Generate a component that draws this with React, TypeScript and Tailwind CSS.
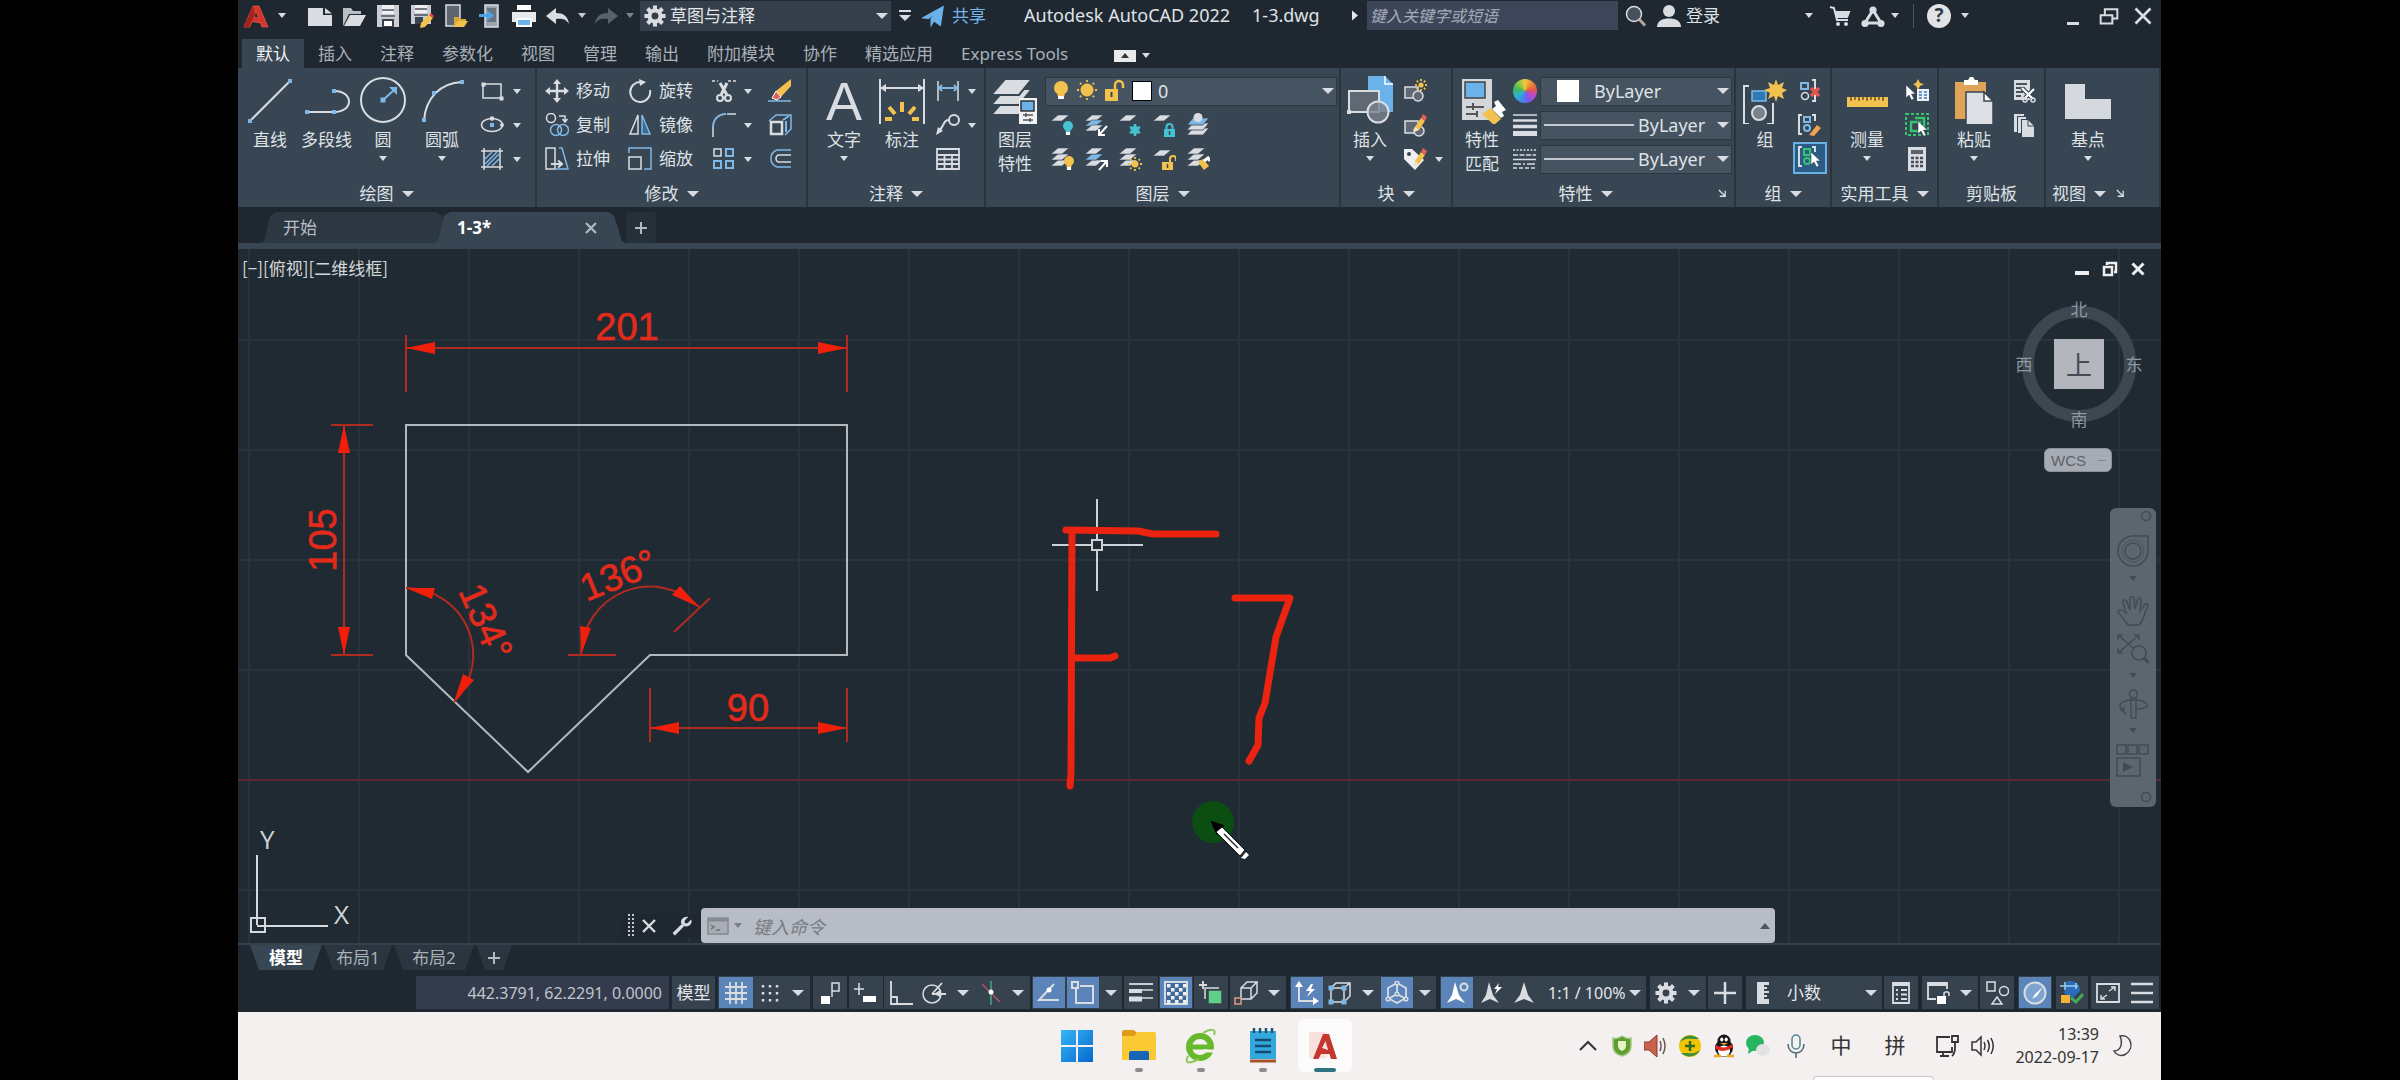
import React, { ReactNode } from 'react';

/* ---------- shared pieces ---------- */

const W = '#d9dde2';
const B = '#7fb8e6';
const Y = '#f2c14e';

function Ico({ children, c = 'h-6 w-6', vb = '0 0 24 24' }: { children: ReactNode; c?: string; vb?: string }) {
  return (
    <svg viewBox={vb} className={`shrink-0 ${c}`} fill="none" stroke={W} strokeWidth="1.5" aria-hidden="true">
      {children}
    </svg>
  );
}

function Tri({ big = false, c = 'fill-[#d9dde2]' }: { big?: boolean; c?: string }) {
  return (
    <svg viewBox="0 0 12 6" className={`shrink-0 ${big ? 'h-[6px] w-[12px]' : 'h-[5px] w-[8px]'} ${c}`} preserveAspectRatio="none" aria-hidden="true">
      <path d="M0 0H12L6 6Z" />
    </svg>
  );
}

function ArrowBtn({ c = 'w-5', label = '更多', big = false }: { c?: string; label?: string; big?: boolean }) {
  return (
    <button type="button" aria-label={label} className={`flex h-full shrink-0 items-center justify-center ${c}`}>
      <Tri big={big} />
    </button>
  );
}

function IconBtn({ label, children, c = 'w-7' }: { label: string; children: ReactNode; c?: string }) {
  return (
    <button type="button" aria-label={label} className={`flex h-[34px] shrink-0 items-center justify-center ${c}`}>
      {children}
    </button>
  );
}

function Big({ icon, label, label2, arrow, c }: { icon: ReactNode; label: string; label2?: string; arrow?: boolean; c: string }) {
  return (
    <button type="button" className={`flex shrink-0 flex-col items-center self-start whitespace-nowrap pt-0.5 ${c}`}>
      {icon}
      <span className="mt-1.5 h-5 text-[17px] leading-5">{label}</span>
      {label2 && <span className="mt-1 h-5 text-[17px] leading-5">{label2}</span>}
      {arrow && (
        <span className="mt-1.5 flex">
          <Tri />
        </span>
      )}
    </button>
  );
}

function Panel({ title, arrow = true, launcher, left, children }: { title: string; arrow?: boolean; launcher?: boolean; left?: boolean; children: ReactNode }) {
  return (
    <section aria-label={title} className="flex flex-col border-r-2 border-[#2a343e] pt-1.5">
      <div className="flex h-[102px]">{children}</div>
      <div className="mt-1 flex h-[27px] items-center">
        <button type="button" className={`flex items-center gap-2 whitespace-nowrap text-[17px] leading-6 ${left ? 'pl-[6px]' : 'flex-1 justify-center'}`}>
          {title}
          {arrow && <Tri big />}
        </button>
        {launcher && (
          <button type="button" aria-label={`${title}设置`} className={left ? 'ml-[10px]' : 'mr-[7px]'}>
            <Ico c="h-[9px] w-[9px]" vb="0 0 10 10">
              <path d="M1 1L8 8M8 2V8H2" />
            </Ico>
          </button>
        )}
      </div>
    </section>
  );
}

/* ---------- icon drawings ---------- */

const dot = (x: number, y: number, s = 4) => <rect key={`${x}-${y}`} x={x - s / 2} y={y - s / 2} width={s} height={s} fill={B} stroke="none" />;

const Sheet = ({ y = 0, f = W }: { y?: number; f?: string }) => <path d={`M8 ${1 + y}H19L12 ${7 + y}H1Z`} fill={f} stroke="#384552" strokeWidth="0.6" />;

const Pencil = () => (
  <g stroke="none">
    <path d="M12 14L18 5L22 8L16 17L11 19Z" fill={Y} />
    <path d="M18 5L20 1L24 4L22 8Z" fill="#e0605a" />
    <path d="M12 14L11 19L16 17Z" fill="#f3e3c8" />
  </g>
);

const Cursor = ({ x, y }: { x: number; y: number }) => (
  <path d={`M${x} ${y}V${y + 13}L${x + 3} ${y + 10}L${x + 5.5} ${y + 15}L${x + 8} ${y + 14}L${x + 5.5} ${y + 9}H${x + 9.5}Z`} fill="#fff" stroke="#384552" strokeWidth="0.6" />
);

const Lock = ({ x, y, f, open }: { x: number; y: number; f: string; open?: boolean }) => (
  <g>
    <rect x={x} y={y} width="11" height="8" fill={f} stroke="none" />
    <path d={open ? `M${x + 8} ${y}V${y - 3}A3 3 0 0 1 ${x + 14} ${y - 3}V${y - 1}` : `M${x + 2.5} ${y}V${y - 2}A3 3 0 0 1 ${x + 8.5} ${y - 2}V${y}`} stroke={f} strokeWidth="2" />
    <path d={`M${x + 5.5} ${y + 2}v4`} stroke="#384552" />
  </g>
);

const Sun = ({ x, y, r, f = Y }: { x: number; y: number; r: number; f?: string }) => (
  <g stroke={f} strokeWidth="1.8">
    <circle cx={x} cy={y} r={r} fill={f} stroke="none" />
    {[0, 45, 90, 135, 180, 225, 270, 315].map((a) => (
      <path key={a} d={`M${x} ${y - r - 1.5}V${y - r - 3.5}`} transform={`rotate(${a} ${x} ${y})`} />
    ))}
  </g>
);

const Bulb = ({ x, y, f = Y, r = 7 }: { x: number; y: number; f?: string; r?: number }) => (
  <g stroke="none">
    <circle cx={x} cy={y} r={r} fill={f} />
    <path d={`M${x - r / 2} ${y + r - 2}h${r}v3h${-r}z`} fill={f} />
    <path d={`M${x - r / 2.4} ${y + r + 1}h${r / 1.2}v3h${-r / 1.2}z`} fill="#fff" />
  </g>
);

const Gear = ({ c = 'h-[22px] w-[22px]' }: { c?: string }) => (
  <Ico c={c}>
    <circle cx="12" cy="12" r="6" strokeWidth="4.5" />
    {[0, 45, 90, 135, 180, 225, 270, 315].map((a) => (
      <path key={a} d="M12 0.5V5" strokeWidth="4.4" transform={`rotate(${a} 12 12)`} />
    ))}
  </Ico>
);

/* ---------- title bar ---------- */

function TitleBar() {
  return (
    <header className="flex h-[39px] items-start whitespace-nowrap bg-[#1f2831] pl-1 text-[18px]">
      <div className="flex h-[31px] flex-1 items-center">
        <button type="button" aria-label="应用程序菜单" className="flex items-center gap-2">
          <Ico c="h-7 w-7" vb="0 0 28 28">
            <path d="M2 25L11 4H17L26 25H20L18.500 21L10 19.500L7.500 25Z M12 15L16.500 16L14 9Z" fill="#d3362c" fillRule="evenodd" stroke="#e5564a" strokeWidth="0.8" />
            <path d="M2 25L7 25L13 12L11 4Z" fill="#a8201a" stroke="none" />
          </Ico>
          <Tri />
        </button>
        <div className="ml-[22px] flex items-center gap-[10px]">
          <button type="button" aria-label="新建">
            <Ico><path d="M0 4H15V11H24V22H0Z" fill={W} stroke="none" /><path d="M17 4L24 9.500H17Z" fill={W} stroke="none" /></Ico>
          </button>
          <button type="button" aria-label="打开">
            <Ico><path d="M1 22V4H9L11 7H19V10H7Z" fill="#b9bec5" stroke="none" /><path d="M8 11H24L18 22H2Z" fill={W} stroke="none" /></Ico>
          </button>
          <button type="button" aria-label="保存">
            <Ico><path d="M1 1H23V23H1Z" fill="#c9ccd2" stroke="none" /><path d="M6 1H18V10H6Z" fill="#efeff1" stroke="none" /><path d="M6 6H18M5 12H19" stroke="#4b535d" /><path d="M6 15H18V23H6Z" fill="#3a424c" stroke="none" /><path d="M8 17H16V22H8Z" fill="#fff" stroke="none" /></Ico>
          </button>
          <button type="button" aria-label="另存为">
            <Ico><path d="M1 1H21V20H1Z" fill="#c9ccd2" stroke="none" /><path d="M5 1H17V9H5Z" fill="#efeff1" stroke="none" /><path d="M5 5H17M4 11H18" stroke="#4b535d" /><path d="M5 13H13V20H5Z" fill="#3a424c" stroke="none" /><path d="M11 19L19 11L23 14L15 23L10 24Z" fill={Y} stroke="none" /><path d="M19 11L21 9L24 12L23 14Z" fill="#e0453a" stroke="none" /></Ico>
          </button>
          <button type="button" aria-label="从移动设备打开">
            <Ico><path d="M2 1H16V22H2Z" fill="#5d666f" stroke={W} /><path d="M10 13H15L17 15H22V18H14L11 22H10Z" fill="#d9a83a" stroke="none" /><path d="M14 17H24L20 23H10Z" fill={Y} stroke="none" /></Ico>
          </button>
          <button type="button" aria-label="保存到移动设备">
            <Ico><path d="M7 1H20V23H7Z" fill="#9ea4ac" stroke={W} /><path d="M9 4H18V18H9Z" fill="#6b747e" stroke="none" /><path d="M1 10H9V6L16 11.500L9 17V13H1Z" fill="#4ba3e3" stroke="none" /></Ico>
          </button>
          <button type="button" aria-label="打印">
            <Ico><path d="M5 1H19V6H5Z" fill="#fff" stroke="none" /><path d="M0 8H24V18H0Z" fill="#e6e8eb" stroke="none" /><path d="M4 14H20V23H4Z" fill="#fff" stroke="none" /><path d="M6 16H18V21H6Z" fill="#6bb1ea" stroke="none" /></Ico>
          </button>
        </div>
        <div className="ml-[10px] flex items-center gap-2">
          <button type="button" aria-label="放弃">
            <Ico><path d="M0 12L10 4V9C17 9 22 12 23 20C20 15 16 14.500 10 15V20Z" fill={W} stroke="none" /></Ico>
          </button>
          <Tri c="fill-[#c5cad0]" />
          <button type="button" aria-label="重做">
            <Ico><path d="M24 12L14 4V9C7 9 2 12 1 20C4 15 8 14.500 14 15V20Z" fill="#59626c" stroke="none" /></Ico>
          </button>
          <Tri c="fill-[#7d858e]" />
        </div>
        <div className="relative ml-[6px] flex h-[30px] w-[251px] items-center bg-[#343f4b]">
          <span className="pointer-events-none absolute left-1 flex"><Gear /></span>
          <select aria-label="工作空间" className="h-full w-full appearance-none bg-transparent pl-[30px] text-[17px] text-[#e4e7ea]">
            <option>草图与注释</option>
          </select>
          <span className="pointer-events-none absolute right-[3px] flex"><Tri big /></span>
        </div>
        <button type="button" aria-label="自定义快速访问工具栏" className="ml-2 flex flex-col items-center gap-[3px]">
          <span className="h-[2px] w-3 bg-[#d9dde2]" />
          <Tri big />
        </button>
        <button type="button" className="ml-[11px] flex items-center gap-2 text-[17px] text-[#74b5ec]">
          <Ico c="h-[22px] w-[22px]"><path d="M1 14L23 2L20 22L13 17L10 22V15L19 6L7 14.500Z" fill="#6bb1ea" stroke="#6bb1ea" /></Ico>
          共享
        </button>
        <h1 className="ml-[38px] flex gap-[22px] text-[18px] text-[#dfe2e6]">
          <span>Autodesk AutoCAD 2022</span>
          <span>1-3.dwg</span>
        </h1>
      </div>
      <div className="flex h-[31px] items-center">
        <svg viewBox="0 0 6 10" className="mr-[9px] h-[11px] w-[6px] fill-[#e4e7ea]" aria-hidden="true"><path d="M0 0L6 5L0 10Z" /></svg>
        <input aria-label="搜索" placeholder="键入关键字或短语" className="h-[29px] w-[251px] bg-[#3c4658] pl-[3px] text-[16px] italic placeholder:text-[#a5acb8]" />
        <button type="button" aria-label="查找" className="ml-[6px]">
          <Ico><circle cx="10" cy="10" r="7.500" fill="#46515d" /><path d="M15.500 15.500L21 21.500" strokeWidth="3" stroke="#b7a79a" /></Ico>
        </button>
        <button type="button" className="ml-[9px] flex items-center gap-[5px] text-[17px] text-[#dfe2e6]">
          <Ico><circle cx="12" cy="7" r="6" fill={W} stroke="none" /><path d="M0 23C0 17 5 14.500 12 14.500S24 17 24 23Z" fill={W} stroke="none" /></Ico>
          登录
        </button>
        <ArrowBtn c="ml-[79px] w-5" label="登录菜单" />
        <button type="button" aria-label="应用商店" className="ml-[9px]">
          <Ico><path d="M2 3L6 4L9 16H20M7 8H21L19 13H9" stroke={W} strokeWidth="2" /><path d="M7 7H22L20 13H8Z" fill={W} stroke="none" /><circle cx="10" cy="20" r="2" fill={W} stroke="none" /><circle cx="18" cy="20" r="2" fill={W} stroke="none" /></Ico>
        </button>
        <button type="button" aria-label="Autodesk 帐户" className="ml-[9px]">
          <Ico><path d="M12 6L4 19H20Z" strokeWidth="3" /><circle cx="12" cy="6" r="3.600" fill={W} stroke="none" /><circle cx="4" cy="19.500" r="3.600" fill={W} stroke="none" /><circle cx="20" cy="19.500" r="3.600" fill={W} stroke="none" /></Ico>
        </button>
        <ArrowBtn label="帐户菜单" />
        <span className="ml-2 h-6 w-px bg-[#4a545f]" />
        <button type="button" aria-label="帮助" className="ml-[13px] flex h-6 w-6 items-center justify-center rounded-full bg-[#e1e3e6] text-[19px] font-bold leading-none text-[#333b45]">?</button>
        <ArrowBtn c="ml-1 w-5" label="帮助菜单" />
        <button type="button" aria-label="最小化" className="ml-[92px] mt-4 h-[3px] w-3 bg-[#d9dde2]" />
        <button type="button" aria-label="还原" className="ml-5">
          <Ico c="h-5 w-5"><path d="M2 11H16V21H2Z M7 10V4H22V15H17" strokeWidth="2.400" /></Ico>
        </button>
        <button type="button" aria-label="关闭" className="ml-[14px] mr-2">
          <Ico c="h-5 w-5"><path d="M3 3L21 21M21 3L3 21" strokeWidth="3.200" /></Ico>
        </button>
      </div>
    </header>
  );
}

function MenuTabs() {
  const tabs = ['默认', '插入', '注释', '参数化', '视图', '管理', '输出', '附加模块', '协作', '精选应用', 'Express Tools'];
  return (
    <nav aria-label="功能区选项卡" className="flex h-[29px] items-stretch bg-[#1f2831] pl-1 text-[17px]">
      {tabs.map((t, i) => (
        <button
          key={t}
          type="button"
          className={`whitespace-nowrap px-[14px] leading-[29px] ${i === 0 ? 'bg-[#384552] text-[#eef0f2]' : 'text-[#a9b0b8]'}`}
        >
          {t}
        </button>
      ))}
      <button type="button" aria-label="最小化功能区" className="ml-8 flex items-center gap-[6px] pt-1">
        <span className="flex h-3 w-[22px] items-center justify-center bg-[#e8eaec]">
          <svg viewBox="0 0 8 5" className="h-[5px] w-2 fill-[#333]" aria-hidden="true"><path d="M0 5L4 0L8 5Z" /></svg>
        </span>
        <Tri />
      </button>
    </nav>
  );
}

/* ---------- ribbon ---------- */

const smallRow = 'flex h-[34px] items-center';
const L = 'h-12 w-12';

function Combo({ label, value, pl, children, c = 'h-[29px]' }: { label: string; value: string; pl: string; children?: ReactNode; c?: string }) {
  return (
    <div className={`relative flex w-full items-center border border-[#2d3843] bg-[#465361] ${c}`}>
      {children}
      <select aria-label={label} className={`h-full w-full appearance-none bg-transparent text-[18px] leading-6 text-[#dfe2e6] ${pl}`}>
        <option>{value}</option>
      </select>
      <span className="pointer-events-none absolute right-[2px] flex"><Tri big /></span>
    </div>
  );
}

const LabelBtn = ({ icon, text }: { icon: ReactNode; text: string }) => (
  <button type="button" className={`${smallRow} gap-[5px] whitespace-nowrap text-[17px]`}>
    <span className="flex w-7 justify-center">{icon}</span>
    {text}
  </button>
);

function Ribbon() {
  const layerTools: ReactNode[] = [
    <><Sheet y={1} /><Bulb x={18} y={13} f="#45c3d3" r={5} /></>,
    <><Sheet y={1} /><Sheet y={6} f={B} /><Sheet y={11} /><path d="M23 13L15 22M15 16V22H21" stroke="#fff" strokeWidth="2" /></>,
    <><Sheet y={1} /><path d="M17 11V23M12 14L22 20M22 14L12 20" stroke="#45c3d3" strokeWidth="2.500" /><circle cx="17" cy="17" r="3.500" stroke="#45c3d3" /></>,
    <><Sheet y={1} /><Lock x={12} y={16} f="#45c3d3" /></>,
    <><path d="M7 15H23L17 22H1Z" fill={W} stroke="#384552" strokeWidth="0.8" /><path d="M7 10H23L17 17H1Z" fill={W} stroke="#384552" strokeWidth="0.8" /><path d="M7 5H23L17 12H1Z" fill={B} stroke="#384552" strokeWidth="0.8" /><circle cx="12" cy="4.500" r="4.500" fill={W} stroke="none" /></>,
    <><Sheet y={12} /><Sheet y={6} /><Sheet /><Bulb x={19} y={14} r={5} /></>,
    <><Sheet y={12} /><Sheet y={6} f={B} /><Sheet /><path d="M15 23L23 14M17 14H23V20" stroke="#fff" strokeWidth="2" /></>,
    <><Sheet y={12} /><Sheet y={6} /><Sheet /><Sun x={17} y={17} r={3.5} /></>,
    <><Sheet y={2} /><Lock x={10} y={15} f={Y} open /></>,
    <><Sheet y={12} /><Sheet y={6} /><Sheet /><path d="M12 15L17 12L23 19L18 23Z" fill={Y} stroke="none" /><path d="M18 14L22 11L24 14" stroke="#fff" strokeWidth="3" /></>,
  ];
  return (
    <div className="grid grid-cols-[299fr_271fr_178fr_355fr_112fr_283fr_96fr_107fr_107fr_115fr] bg-[#384552] text-[#dfe2e6]">
      <Panel title="绘图">
        <div className="flex pl-[6px]">
          <Big c="w-[52px]" label="直线" icon={<Ico c={L} vb="0 0 48 48"><path d="M4 45L44 5" strokeWidth="2" />{dot(4, 45)}{dot(44, 5)}</Ico>} />
          <Big c="w-[61px]" label="多段线" icon={<Ico c={L} vb="0 0 48 48"><path d="M4 36H31C51 36 51 15 31 15" strokeWidth="2" />{dot(4, 36)}{dot(31, 36)}{dot(31, 15)}</Ico>} />
          <Big c="w-[52px]" label="圆" arrow icon={<Ico c={L} vb="0 0 48 48"><circle cx="24" cy="24" r="22" strokeWidth="2" /><path d="M24 24L35 14" stroke={B} strokeWidth="2" /><path d="M30 11H38V19Z" fill={B} stroke="none" />{dot(24, 24, 5)}</Ico>} />
          <Big c="w-[66px]" label="圆弧" arrow icon={<Ico c={L} vb="0 0 48 48"><path d="M6 44C8 22 22 7 44 6" strokeWidth="2" />{dot(6, 44)}{dot(16, 17)}{dot(44, 6)}</Ico>} />
          <div className="ml-[2px]">
            <div className={smallRow}><IconBtn label="矩形" c="w-[30px]"><Ico><path d="M3 5H21V19H3Z" />{[[3, 5], [21, 19]].map(([x, y]) => <rect key={x} x={x - 1.5} y={y - 1.5} width="4" height="4" fill={W} stroke="none" />)}</Ico></IconBtn><ArrowBtn /></div>
            <div className={smallRow}><IconBtn label="椭圆" c="w-[30px]"><Ico><ellipse cx="12" cy="12" rx="10.500" ry="6.500" />{dot(12, 12)}<circle cx="12" cy="5.500" r="1.500" fill={W} /><circle cx="22" cy="12" r="1.200" fill={W} /></Ico></IconBtn><ArrowBtn /></div>
            <div className={smallRow}><IconBtn label="图案填充" c="w-[30px]"><Ico><path d="M1 4H23M1 20H23M4 1V23M20 1V23" /><path d="M5 12L12 5M5 17L17 5M7 19L19 7M12 19L19 12" stroke={B} /></Ico></IconBtn><ArrowBtn /></div>
          </div>
        </div>
      </Panel>

      <Panel title="修改">
        <div className="flex pl-[6px]">
          <div>
            <LabelBtn text="移动" icon={<Ico><path d="M12 3V21M3 12H21" strokeWidth="2.400" /><path d="M12 0L16 5H8ZM12 24L8 19H16ZM0 12L5 8V16ZM24 12L19 16V8Z" fill={W} stroke="none" /></Ico>} />
            <LabelBtn text="复制" icon={<Ico><circle cx="6" cy="5" r="4.500" /><path d="M14 3H20V8M17.500 6L20 9L22.500 6" /><circle cx="11" cy="17" r="5.500" stroke={B} /><circle cx="18" cy="17" r="5.500" stroke={B} /></Ico>} />
            <LabelBtn text="拉伸" icon={<Ico><path d="M1 1H10V22H1Z" /><path d="M14 1H17L23 22H11" stroke={B} /><path d="M6 17H16M13 13.500L17 17L13 20.500" strokeWidth="2" /></Ico>} />
          </div>
          <div className="ml-[16px]">
            <LabelBtn text="旋转" icon={<Ico><path d="M13 3A10 10 0 1 0 22 11" strokeWidth="2" /><path d="M11 0L18 3L12 7Z" fill={W} stroke="none" /></Ico>} />
            <LabelBtn text="镜像" icon={<Ico><path d="M10 2V21H2Z" /><path d="M14 2V21H22Z" stroke={B} fill="#3c6a92" /></Ico>} />
            <LabelBtn text="缩放" icon={<Ico><path d="M1 10H13V22H1Z" /><path d="M1 6V1H23V22H16" stroke={B} /></Ico>} />
          </div>
          <div className="ml-[18px]">
            <div className={smallRow}><IconBtn label="修剪" c="w-[26px]"><Ico><path d="M0 2H6M16 2H24" strokeDasharray="3 2" /><path d="M8 4L15 16M15 4L9 16" strokeWidth="3" /><circle cx="8" cy="19" r="3" strokeWidth="2" /><circle cx="16" cy="19" r="3" strokeWidth="2" /></Ico></IconBtn><ArrowBtn c="w-[22px]" /></div>
            <div className={smallRow}><IconBtn label="圆角" c="w-[26px]"><Ico><path d="M1 24V14" /><path d="M1 14C1 6 7 1 14 1" stroke={B} strokeWidth="2" /><path d="M15 1H24" /></Ico></IconBtn><ArrowBtn c="w-[22px]" /></div>
            <div className={smallRow}><IconBtn label="阵列" c="w-[26px]"><Ico><path d="M2 2H9V9H2Z" /><path d="M14 2H21V9H14ZM2 14H9V21H2ZM14 14H21V21H14Z" stroke={B} strokeWidth="2" /></Ico></IconBtn><ArrowBtn c="w-[22px]" /></div>
          </div>
          <div className="ml-[7px]">
            <IconBtn label="删除"><Ico><path d="M0 22H23" stroke={B} /><path d="M8 12L23 0V7L13 18Z" fill={Y} stroke="none" /><path d="M8 12L13 18L9 21L4 19Z" fill="#e0605a" stroke="#fff" strokeWidth="1" /></Ico></IconBtn>
            <IconBtn label="分解"><Ico><path d="M1 8L8 2H23V16L17 22" stroke={B} /><path d="M3 9H14V21H3Z" strokeWidth="2.500" /><path d="M15 7L21 3M18 8V19" stroke={B} strokeWidth="2" /></Ico></IconBtn>
            <IconBtn label="偏移"><Ico><path d="M23 3H9A9 9 0 0 0 9 20H23" stroke={B} /><path d="M23 8H10A4 4 0 0 0 10 15H23" /></Ico></IconBtn>
          </div>
        </div>
      </Panel>

      <Panel title="注释">
        <div className="flex pl-[10px]">
          <Big c="w-[52px]" label="文字" arrow icon={<span className="h-12 font-['Liberation_Sans',Arial,sans-serif] text-[54px] leading-[50px] text-[#d9dde2]">A</span>} />
          <Big c="w-[64px]" label="标注" icon={<Ico c={L} vb="0 0 48 48"><path d="M2 3V48M46 3V48M3 12H45" strokeWidth="2" /><path d="M2 12L8 8V16ZM46 12L40 16V8Z" fill={W} stroke="none" /><path d="M24 36V26M17 38L11 31M31 38L37 31M14 43H7M34 43H41" stroke={Y} strokeWidth="4" /></Ico>} />
          <div>
            <div className={smallRow}><IconBtn label="线性"><Ico><path d="M2 2V22M22 2V22" /><path d="M3 9H21M6 6L3 9L6 12M18 6L21 9L18 12" stroke={B} strokeWidth="2" /></Ico></IconBtn><ArrowBtn /></div>
            <div className={smallRow}><IconBtn label="引线"><Ico><circle cx="18" cy="7" r="5" strokeWidth="2" /><path d="M13 7C7 7 9 12 3 18" strokeWidth="2" /><path d="M0 22L2 14L7 18Z" fill={W} stroke="none" /></Ico></IconBtn><ArrowBtn /></div>
            <div className={smallRow}><IconBtn label="表格"><Ico><path d="M1 2H23V22H1ZM1 8H23M1 12.500H23M1 17H23M8.500 8V22M16 8V22" strokeWidth="1.800" /></Ico></IconBtn></div>
          </div>
        </div>
      </Panel>

      <Panel title="图层">
        <div className="flex w-full pl-[3px] pr-[2px]">
          <Big
            c="w-[52px]"
            label="图层"
            label2="特性"
            icon={
              <Ico c={L} vb="0 0 48 48">
                {[23, 13, 3].map((y) => <path key={y} d={`M14 ${y}H41L28 ${y + 16}H0Z`} fill={W} stroke="#384552" strokeWidth="2" />)}
                <path d="M28 22H46V48H28Z" fill="#f1f2f4" stroke="none" /><path d="M30 25H43V35H30Z" fill="#6bb1ea" stroke="#333" /><path d="M32 39H42M32 44H42M35 37V41M39 42V46" stroke="#555" />
              </Ico>
            }
          />
          <div className="ml-1 flex-1">
            <div className={smallRow}>
              <Combo label="图层" value="0" pl="pl-[112px]">
                <div className="pointer-events-none absolute left-[3px] flex items-center gap-[2px]">
                  <Ico><Bulb x={12} y={9} r={7} /></Ico>
                  <Ico><Sun x={12} y={11} r={6.5} /></Ico>
                  <Ico><path d="M4 10H17V22H4Z" fill={Y} stroke="none" /><path d="M14 10V6A4 4 0 0 1 22 6V9" stroke={Y} strokeWidth="2.500" /><path d="M10.500 13V18" stroke="#384552" strokeWidth="2" /></Ico>
                </div>
                <span className="pointer-events-none absolute left-[86px] h-5 w-5 border border-black bg-white" />
              </Combo>
            </div>
            <div className="grid w-[170px] grid-cols-5">
              {layerTools.map((g, i) => (
                <IconBtn key={i} label={`图层工具 ${i + 1}`} c="w-[34px]"><Ico>{g}</Ico></IconBtn>
              ))}
            </div>
          </div>
        </div>
      </Panel>

      <Panel title="块">
        <div className="flex pl-[2px]">
          <Big c="w-[54px]" label="插入" arrow icon={<Ico c={L} vb="0 0 48 48"><path d="M22 0H39L47 8V36H22Z" fill="#6bb1ea" stroke="none" /><path d="M39 0V8H47" stroke="#fff" /><path d="M3 15H33V36H3Z" fill="#5f6873" stroke={W} strokeWidth="2" /><circle cx="32" cy="36" r="10.500" fill="#7a828c" fillOpacity=".8" stroke={W} strokeWidth="2" /><rect x="1" y="34" width="4" height="4" fill={W} stroke="none" /></Ico>} />
          <div className="ml-[4px]">
            <IconBtn label="创建块"><Ico><path d="M2 8H15V19H2Z" fill="#5f6873" /><circle cx="15" cy="17" r="5" fill="#5f6873" /><Sun x={18} y={6} r={2.6} /></Ico></IconBtn>
            <IconBtn label="编辑块"><Ico><path d="M2 8H15V20H2Z" fill="#5f6873" /><circle cx="16" cy="18" r="5" fill="#5f6873" /><Pencil /></Ico></IconBtn>
            <div className={smallRow}><IconBtn label="块属性"><Ico><path d="M1 2H9L21 13L12 23L1 12Z" fill="#eef0f2" stroke="none" /><circle cx="6" cy="7" r="2" fill="#384552" stroke="none" /><Pencil /></Ico></IconBtn><ArrowBtn /></div>
          </div>
        </div>
      </Panel>

      <Panel title="特性" launcher>
        <div className="flex w-full pl-[3px] pr-[2px]">
          <Big c="w-[52px]" label="特性" label2="匹配" icon={<Ico c={L} vb="0 0 48 48"><path d="M4 3H34V44H4Z" fill="#d3d6da" stroke="none" /><path d="M7 6H27V22H7Z" fill="#6bb1ea" stroke="#444" /><path d="M8 31H26M8 38H20M15 27V34M19 35V41" stroke="#555" strokeWidth="2" /><path d="M24 38L33 32L43 43L36 49Z" fill={Y} stroke="none" /><path d="M34 33L38 30L36 26L40 24L48 34L44 36L46 40L43 42Z" fill="#fff" stroke="none" /></Ico>} />
          <div className="ml-[3px]">
            <IconBtn label="颜色">
              <span className="h-6 w-6 rounded-full bg-[conic-gradient(#f3c944,#e98b2f,#e2574c,#b94ad0,#7a5ce6,#3f8df0,#2fb5c9,#3fb56b,#8cc63f,#f3c944)]" />
            </IconBtn>
            <IconBtn label="线宽"><Ico><path d="M0 2H24" strokeWidth="1.500" /><path d="M0 7.500H24" strokeWidth="2.500" /><path d="M0 13.500H24" strokeWidth="3.500" /><path d="M0 20.500H24" strokeWidth="5" /></Ico></IconBtn>
            <IconBtn label="线型"><Ico><path d="M0 3H23" strokeDasharray="2 1.500" /><path d="M0 8H23" strokeDasharray="5 1.500" /><path d="M0 12.500H23" /><path d="M0 17H23" strokeDasharray="8 2 2 2" /><path d="M0 21H23" strokeDasharray="4 2" /></Ico></IconBtn>
          </div>
          <div className="ml-[1px] flex-1">
            <div className={smallRow}>
              <Combo label="对象颜色" value="ByLayer" pl="pl-[53px]">
                <span className="pointer-events-none absolute left-4 h-[22px] w-[22px] bg-white" />
              </Combo>
            </div>
            <div className={smallRow}>
              <Combo label="线宽" value="ByLayer" pl="pl-[97px]">
                <span className="pointer-events-none absolute left-[3px] h-[2px] w-[90px] bg-[#c3c8cf]" />
              </Combo>
            </div>
            <div className={smallRow}>
              <Combo label="线型" value="ByLayer" pl="pl-[97px]">
                <span className="pointer-events-none absolute left-[3px] h-[2px] w-[90px] bg-[#c3c8cf]" />
              </Combo>
            </div>
          </div>
        </div>
      </Panel>

      <Panel title="组">
        <div className="flex pl-1">
          <Big c="w-[50px]" label="组" icon={<Ico c={L} vb="0 0 48 48"><path d="M8 10H3V48H8M26 48H32V27" strokeWidth="2" /><path d="M11 15H25V25H11Z" fill="#2f78b8" stroke={B} /><circle cx="18" cy="37" r="7" fill="#7a828c" stroke={W} strokeWidth="2" /><path d="M35 3L37 9L43 6L41 12L46 14L41 17L43 23L37 20L35 26L33 20L27 23L29 17L23 14L29 12L27 6L33 9Z" fill={Y} stroke="none" /></Ico>} />
          <div className="ml-[3px]">
            <IconBtn label="解除编组" c="w-[34px]"><Ico><path d="M14 1H17V22H14" strokeWidth="2" /><path d="M3 4H10V10H3Z" stroke={B} strokeWidth="2" /><circle cx="7" cy="17" r="3.500" /><path d="M13 9L21 17M21 9L13 17" stroke="#e2574c" strokeWidth="3.500" /></Ico></IconBtn>
            <IconBtn label="组编辑" c="w-[34px]"><Ico><path d="M4 2H1V21H4M14 2H17V8" strokeWidth="2" /><path d="M6 4H12V9H6Z" stroke={B} strokeWidth="2" /><circle cx="9" cy="15" r="3" stroke={B} strokeWidth="2" /><path d="M11 22L19 12L23 15L16 23Z" fill="#eda44c" stroke="none" /></Ico></IconBtn>
            <button type="button" aria-label="启用组选择" aria-pressed="true" className="flex h-8 w-[34px] items-center justify-center border-2 border-[#6ab0e4] bg-[#2b5c86]">
              <Ico><path d="M4 1H1V20H4M14 1H17V6" strokeWidth="2" /><path d="M6 3H12V9H6Z" stroke="#35c46f" strokeWidth="2" /><circle cx="9" cy="15" r="3" stroke="#35c46f" strokeWidth="2" /><Cursor x={13} y={6} /></Ico>
            </button>
          </div>
        </div>
      </Panel>

      <Panel title="实用工具">
        <div className="flex pl-[7px]">
          <Big c="w-14" label="测量" arrow icon={<Ico c={L} vb="0 0 48 48"><path d="M4 21H45V31H4Z" fill={Y} stroke="none" /><path d="M8 21V25M12 21V24M16 21V25M20 21V24M24 21V25M28 21V24M32 21V25M36 21V24M40 21V25" stroke="#6b5420" /></Ico>} />
          <div className="ml-2">
            <IconBtn label="快速选择"><Ico><path d="M13 0L15 4L19 5L15 7L13 11L11 7L8 5L11 4Z" fill={Y} stroke="none" /><path d="M12 10H24V22H12Z" fill="#eef0f2" stroke="none" /><path d="M14 13H17M14 16H17M14 19H17M19 13H22M19 16H22M19 19H22" stroke="#3278c8" /><Cursor x={1} y={6} /></Ico></IconBtn>
            <IconBtn label="全部选择"><Ico><path d="M1 1H23V22H1Z" stroke="#35c46f" strokeDasharray="3 2" strokeWidth="2" /><path d="M6 9H15V18H6ZM10 5H19V14" stroke="#35c46f" strokeWidth="2.500" /><Cursor x={13} y={8} /></Ico></IconBtn>
            <IconBtn label="快速计算器"><Ico><path d="M3 0H21V24H3Z" fill="#d9dde2" stroke="none" /><path d="M6 3H18V7H6Z" fill="#5a636d" stroke="none" />{[10, 14, 18].map((y) => <path key={y} d={`M6 ${y + 1}H9M10.500 ${y + 1}H13.500M15 ${y + 1}H18`} stroke="#444c56" strokeWidth="2.500" />)}</Ico></IconBtn>
          </div>
        </div>
      </Panel>

      <Panel title="剪贴板" arrow={false}>
        <div className="flex pl-[7px]">
          <Big c="w-14" label="粘贴" arrow icon={<Ico c={L} vb="0 0 48 48"><path d="M5 6H36V43H5Z" fill="#e0a458" stroke="none" /><path d="M14 9V4H18L20 1H23L25 4H28V9Z" fill="#fff" stroke="none" /><path d="M16 16H34L43 25V49H16Z" fill="#dcdfe3" stroke="#384552" /><path d="M34 16V25H43Z" fill="#fff" stroke="#384552" /></Ico>} />
          <div className="ml-2">
            <IconBtn label="剪切"><Ico><path d="M2 1H18V21H2Z" fill={W} stroke="none" /><path d="M4 5H15M4 9H13M4 13H11M4 17H9" stroke="#4b535d" strokeWidth="1.800" /><path d="M10 9L21 20M22 10L13 19" strokeWidth="4.500" stroke="#384552" /><path d="M10 9L21 20M22 10L13 19" strokeWidth="2.200" stroke="#fff" /><circle cx="13" cy="21" r="2" /><circle cx="21" cy="21" r="2" /></Ico></IconBtn>
            <IconBtn label="复制"><Ico><path d="M2 1H12V3H5V19H2Z" fill={W} stroke="none" /><path d="M6 4H14V6H9V20H6Z" fill={W} stroke="none" /><path d="M10 7H16L22 13V24H10Z" fill={W} stroke="none" /><path d="M16 7V13H22" stroke="#384552" strokeWidth="1" /></Ico></IconBtn>
          </div>
        </div>
      </Panel>

      <Panel title="视图" launcher left>
        <div className="flex pl-[14px]">
          <Big c="w-14" label="基点" arrow icon={<Ico c={L} vb="0 0 48 48"><path d="M1 8H21V23H47V43H1Z" fill="#d5d8dc" stroke="none" /></Ico>} />
        </div>
      </Panel>
    </div>
  );
}

/* ---------- file tabs ---------- */

function FileTabs() {
  return (
    <div className="border-b-[6px] border-[#384552] bg-[#1f2831] pl-[22px] pt-[5px]">
      <div className="flex h-[31px] items-stretch text-[17px]">
        <button type="button" className="w-[184px] bg-[#2c3741] pl-[23px] text-left leading-[31px] text-[#b9bfc6] [clip-path:polygon(0_100%,4px_94%,10px_12%,16px_0,176px_0,182px_12%,100%_30%,100%_100%)]">
          开始
        </button>
        <div className="-ml-[10px] flex w-[192px] items-center bg-[#384552] pl-[23px] [clip-path:polygon(0_100%,4px_94%,10px_12%,16px_0,174px_0,180px_12%,188px_94%,100%_100%)]">
          <button type="button" className="flex-1 text-left font-bold text-white">1-3*</button>
          <button type="button" aria-label="关闭选项卡" className="mr-[29px]">
            <Ico c="h-3 w-3" vb="0 0 12 12"><path d="M1 1L11 11M11 1L1 11" strokeWidth="2.200" stroke="#b4bac1" /></Ico>
          </button>
        </div>
        <button type="button" aria-label="新图形" className="flex w-[30px] items-center justify-center rounded bg-[#26303a]">
          <Ico c="h-3 w-3" vb="0 0 12 12"><path d="M6 0V12M0 6H12" strokeWidth="2" stroke="#b4bac1" /></Ico>
        </button>
      </div>
    </div>
  );
}

/* ---------- drawing area ---------- */

function Drawing() {
  return (
    <svg className="absolute inset-0 h-full w-full" aria-label="图形">
      <defs>
        <pattern id="grid" width="110" height="110" patternUnits="userSpaceOnUse" patternTransform="translate(10 90)">
          <path d="M1 0V110M0 1H110" stroke="#28333d" strokeWidth="2" />
        </pattern>
      </defs>
      <rect width="100%" height="100%" fill="url(#grid)" />
      <path d="M0 531H3000" stroke="#5c2830" strokeWidth="2" />
      <g transform="translate(-238 -249)" fill="none">
        <path d="M406 425H847V655H650L528 772L406 655Z" stroke="#b4b9be" strokeWidth="2" />
        <g stroke="#b02a22" strokeWidth="2">
          <path d="M406 335V392M847 335V392M406 348H847" />
          <path d="M331 425H373M331 655H373M344 425V655" />
          <path d="M650 688V742M847 688V742M650 728H847" />
          <path d="M406 588A67 67 0 0 1 454 702" />
          <path d="M581 655A69 69 0 0 1 699 607M568 655H616M710 598L674 632" />
        </g>
        <g fill="#f01f0c">
          <path d="M406 348L435 342V354ZM847 348L818 342V354Z" />
          <path d="M344 425L338 453H350ZM344 655L338 627H350Z" />
          <path d="M650 728L679 722V734ZM847 728L818 722V734Z" />
          <path d="M406 588L435 588L432 599ZM454 702L474 680L463 674Z" />
          <path d="M581 655L591 628L580 626ZM699 607L680 586L672 595Z" />
        </g>
        <g fill="#e32a1b" stroke="#e32a1b" strokeWidth="0.600" textAnchor="middle" className="font-['Liberation_Sans',Arial,sans-serif] text-[38px]">
          <text x="627" y="340">201</text>
          <text x="748" y="721">90</text>
          <text transform="translate(336 540) rotate(-90)">105</text>
          <text transform="translate(474 627) rotate(66)">134°</text>
          <text transform="translate(623 587) rotate(-22)">136°</text>
        </g>
        <path d="M1097 499V540M1097 550V591M1052 545H1092M1102 545H1143M1092 540H1102V550H1092Z" stroke="#cdd2d6" strokeWidth="2" />
        <g stroke="#ea2410" strokeWidth="7" strokeLinecap="round" strokeLinejoin="round">
          <path d="M1066 530L1138 531L1153 534L1216 534" />
          <path d="M1072 532L1071 773L1070 786" />
          <path d="M1073 658H1110L1115 656" />
          <path d="M1235 598H1290L1281 623L1276 637L1265 703L1259 718L1258 745L1249 761" />
        </g>
        <circle cx="1213" cy="822" r="21" fill="#0c4d12" />
        <path d="M1213 823L1222 826L1217 832Z" fill="#000" stroke="#000" strokeWidth="3" />
        <path d="M1222 827L1245 850L1240 856L1216 832Z" fill="#fff" stroke="#111" />
        <path d="M1224 834L1238 848" stroke="#333" strokeWidth="1.500" />
        <path d="M1246 852L1249 855L1245 859L1241 858Z" fill="#fff" />
        <path d="M251 918H265V932H251ZM257 855V925M257 926H328" stroke="#d5d9dd" strokeWidth="2" />
        <g fill="#cfd4d8" className="font-['Open_Sans',sans-serif] text-[26px]">
          <text x="260" y="849">Y</text>
          <text x="334" y="924">X</text>
        </g>
      </g>
    </svg>
  );
}

function ViewCube() {
  return (
    <div className="absolute right-[17px] top-[51px] grid w-[130px] grid-cols-[20px_90px_20px] grid-rows-[18px_92px_18px] place-items-center text-[17px] leading-[18px] text-[#8f979f]">
      <span className="col-start-2 row-span-3 row-start-1 h-[116px] w-[114px] rounded-full border-[12px] border-[#3b4852]" />
      <button type="button" className="col-start-2 row-start-1">北</button>
      <button type="button" className="col-start-1 row-start-2">西</button>
      <button type="button" className="col-start-2 row-start-2 h-[50px] w-[50px] bg-[#b3b6bd] text-[26px] leading-[50px] text-[#444b54]">上</button>
      <button type="button" className="col-start-3 row-start-2">东</button>
      <button type="button" className="col-start-2 row-start-3">南</button>
    </div>
  );
}

function NavBar() {
  const s = '#414c56';
  const btn = 'flex w-full justify-center';
  return (
    <nav aria-label="导航栏" className="absolute right-[5px] top-[259px] flex h-[299px] w-[46px] flex-col items-center rounded-md bg-[#5b666f] pb-1 pt-0.5">
      <button type="button" aria-label="关闭导航栏" className="flex w-full justify-end pr-1"><Ico c="h-3 w-3" vb="0 0 12 12"><circle cx="6" cy="6" r="4.500" stroke={s} /></Ico></button>
      <button type="button" aria-label="控制盘" className={`${btn} mt-3`}><Ico c="h-[34px] w-[34px]" vb="0 0 34 34"><path d="M17 2H32V17A15 15 0 1 1 17 2Z" stroke={s} /><circle cx="17" cy="17" r="8" stroke={s} /><circle cx="17" cy="17" r="11" stroke={s} strokeWidth="0.800" /></Ico></button>
      <span className="mt-[8px] flex"><Tri c="fill-[#414c56]" /></span>
      <button type="button" aria-label="平移" className={`${btn} mt-[14px]`}><Ico c="h-8 w-8" vb="0 0 32 32"><path d="M11 30C7 25 4 20 1 17C1 14 5 14 9 18L6 7C6 4 9 4 10 7L13 15L13 3C13 1 16 1 17 3L18 14L21 4C22 2 25 3 24 6L23 16L28 9C30 8 32 10 30 13C27 19 27 25 22 30Z" stroke={s} /></Ico></button>
      <button type="button" aria-label="范围缩放" className={`${btn} mt-[6px]`}><Ico c="h-8 w-8" vb="0 0 32 32"><path d="M1 2L22 20M22 2L1 20M1 7V2H6M17 2H22V7M1 15V20H6" stroke={s} /><circle cx="22" cy="20" r="7" stroke={s} fill="#5b666f" /><path d="M27 25L32 30" stroke={s} strokeWidth="3" /></Ico></button>
      <span className="mt-[8px] flex"><Tri c="fill-[#414c56]" /></span>
      <button type="button" aria-label="动态观察" className={`${btn} mt-[10px]`}><Ico c="h-8 w-8" vb="0 0 32 32"><path d="M14 9V30H19V9M16.500 2A4 4 0 1 1 16.400 2" stroke={s} /><path d="M8 23C-2 19 4 12 16 12C30 12 38 20 20 21M8 19L4 22L9 26" stroke={s} /></Ico></button>
      <span className="mt-[8px] flex"><Tri c="fill-[#414c56]" /></span>
      <button type="button" aria-label="ShowMotion" className={`${btn} mt-[10px]`}><Ico c="h-9 w-9" vb="0 0 36 36"><path d="M2 2H11V11H2ZM13 2H22V11H13ZM24 2H33V11H24ZM2 15H25V33H2Z" stroke={s} /><path d="M8 19L18 24L8 29Z" fill={s} stroke="none" /></Ico></button>
      <button type="button" aria-label="导航栏选项" className="mt-auto flex w-full justify-end pr-1"><Ico c="h-3 w-3" vb="0 0 12 12"><circle cx="6" cy="6" r="4.500" stroke={s} /></Ico></button>
    </nav>
  );
}

function CommandLine() {
  return (
    <div className="absolute bottom-0 left-[384px] right-[386px] flex h-[35px] items-center">
      <div className="flex w-[79px] items-center bg-[#1f2831]">
        <Ico c="ml-[5px] h-6 w-2" vb="0 0 8 24"><path d="M2 0V24M6 0V24" strokeDasharray="2 2" strokeWidth="2" stroke="#c3c8ce" /></Ico>
        <button type="button" aria-label="关闭命令行" className="ml-[7px]"><Ico c="h-[14px] w-[14px]" vb="0 0 14 14"><path d="M1 1L13 13M13 1L1 13" strokeWidth="2.400" /></Ico></button>
        <button type="button" aria-label="自定义命令行" className="ml-[15px]"><Ico c="h-[22px] w-[22px]"><path d="M3 21L13 11" strokeWidth="3.600" /><path d="M19 2L15 6V9H18L22 5C24 10 19 14 14 12L11 9C10 5 14 1 19 2Z" fill={W} stroke="none" /></Ico></button>
      </div>
      <div className="relative flex h-full flex-1 items-center rounded-sm bg-[#b8bcc5]">
        <button type="button" aria-label="最近使用的命令" className="absolute left-[6px] flex items-center gap-[5px]">
          <Ico c="h-[18px] w-[22px]" vb="0 0 22 18"><path d="M1 1H21V17H1Z" stroke="#858a92" fill="#a9adb5" /><path d="M1 3H21" stroke="#858a92" strokeWidth="3" /><path d="M4 8L7 10L4 12M9 13H13" stroke="#6c7179" /></Ico>
          <Tri c="fill-[#7d828a]" />
        </button>
        <input aria-label="命令" placeholder="键入命令" className="h-full w-full bg-transparent pl-[52px] text-[18px] italic text-[#333] placeholder:text-[#777c85]" />
        <button type="button" aria-label="命令历史" className="absolute right-[5px] flex">
          <svg viewBox="0 0 10 6" className="h-[6px] w-[10px] fill-[#4f555d]" aria-hidden="true"><path d="M0 6L5 0L10 6Z" /></svg>
        </button>
      </div>
    </div>
  );
}

function Canvas() {
  return (
    <main className="relative min-h-[600px] flex-1 overflow-hidden border-b-2 border-[#34404b] bg-[#202a32] font-['Noto_Sans_CJK_SC',sans-serif]">
      <Drawing />
      <button type="button" className="relative ml-1 mt-[7px] block text-[17px] leading-6 text-[#d3d7db]">[−][俯视][二维线框]</button>
      <div className="absolute right-4 top-[12px] flex items-center gap-[13px]">
        <button type="button" aria-label="最小化视口" className="mt-2 h-[4px] w-[14px] bg-[#eceef0]" />
        <button type="button" aria-label="还原视口"><Ico c="h-4 w-4" vb="0 0 16 16"><path d="M2 6H10V14H2ZM5 4V2H14V11H12" stroke="#eceef0" strokeWidth="2.500" /></Ico></button>
        <button type="button" aria-label="关闭视口"><Ico c="h-[14px] w-[14px]" vb="0 0 14 14"><path d="M1.500 1.500L12.500 12.500M12.500 1.500L1.500 12.500" stroke="#eceef0" strokeWidth="3" /></Ico></button>
      </div>
      <ViewCube />
      <button type="button" className="absolute right-[49px] top-[199px] flex h-6 w-[68px] items-center gap-3 rounded-md border border-[#8b9099] bg-[#a7abb3] pl-1.5 font-['Liberation_Sans',sans-serif] text-[15px] leading-none text-[#5c626b]">
        WCS
        <span className="h-px w-2 bg-[#82878f]" />
      </button>
      <NavBar />
      <CommandLine />
    </main>
  );
}

function LayoutTabs() {
  const base = 'flex h-full items-center justify-center [clip-path:polygon(0_0,100%_0,calc(100%-9px)_100%,9px_100%)]';
  return (
    <div className="h-[31px] bg-[#1f2831] pb-[6px] pl-[12px]">
      <div className="flex h-full gap-[2px] text-[17px] leading-none text-[#a9b0b8]">
        <button type="button" className={`${base} w-[72px] bg-[#384552] font-bold text-white`}>模型</button>
        <button type="button" className={`${base} w-[68px] bg-[#2a353f]`}>布局1</button>
        <button type="button" className={`${base} w-[80px] bg-[#2a353f]`}>布局2</button>
        <button type="button" aria-label="新建布局" className={`${base} w-[36px] bg-[#2a353f]`}>
          <Ico c="h-3 w-3" vb="0 0 12 12"><path d="M6 0V12M0 6H12" strokeWidth="2" stroke="#b4bac1" /></Ico>
        </button>
      </div>
    </div>
  );
}

/* ---------- status bar ---------- */

function Cell({ label, c = 'w-[34px]', on, children }: { label: string; c?: string; on?: boolean; children: ReactNode }) {
  return (
    <button type="button" aria-label={label} aria-pressed={!!on} className={`flex h-full shrink-0 items-center justify-center ${c} ${on ? 'border border-[#34404c] bg-[#5b85b9]' : ''}`}>
      <Ico>{children}</Ico>
    </button>
  );
}

const Grp = ({ c = 'ml-[2px]', children }: { c?: string; children: ReactNode }) => <div className={`flex h-full shrink-0 bg-[#36424e] ${c}`}>{children}</div>;

function StatusBar() {
  return (
    <footer className="flex h-[36px] items-center bg-[#1f2831] pb-[3px] text-[#e4e7ea]">
      <output aria-label="坐标" className="ml-[178px] flex h-full w-[253px] shrink-0 items-center justify-end whitespace-nowrap bg-[#343b4d] pr-[7px] text-[16px] text-[#c0c5cb]">442.3791, 62.2291, 0.0000</output>
      <button type="button" className="ml-[3px] h-full w-[43px] shrink-0 bg-[#36424e] text-[17px]">模型</button>
      <Grp c="ml-[3px]">
        <Cell label="栅格" c="w-9" on><path d="M6 1V23M12 1V23M18 1V23M1 6H23M1 12H23M1 18H23" strokeWidth="1.800" /></Cell>
        <Cell label="捕捉" c="w-8"><path d="M5 4V22M12 4V22M19 4V22" strokeWidth="2.500" strokeDasharray="2.500 4.500" /></Cell>
        <ArrowBtn c="w-6" big />
      </Grp>
      <Grp c="ml-[3px]"><Cell label="推断约束"><path d="M14 2H21V10H14ZM14 10V16" /><path d="M3 15H12V23H3Z" fill="#fff" stroke="none" /></Cell></Grp>
      <Grp><Cell label="动态输入"><path d="M5 2V14M0 8H10" /><path d="M9 15H22V21H9Z" fill="#fff" stroke="none" /></Cell></Grp>
      <Grp c="ml-px">
        <Cell label="正交"><path d="M2 0V23H24M2 16H8V23" strokeWidth="1.800" /></Cell>
        <Cell label="极轴" c="w-8"><circle cx="10" cy="13" r="9" /><path d="M10 13H24M10 13L20 2" strokeWidth="1.800" /><path d="M18 9L12 13L18 16Z" fill={W} stroke="none" /></Cell>
        <ArrowBtn c="w-[26px]" big />
        <Cell label="等轴测" c="w-[30px]"><path d="M3 3L21 21" stroke="#b05566" strokeWidth="1.500" /><path d="M12 0V24" stroke="#49a888" strokeWidth="1.500" /><circle cx="12" cy="11" r="2.500" fill="#fff" stroke="none" /></Cell>
        <ArrowBtn c="w-6" big />
      </Grp>
      <Grp>
        <Cell label="对象捕捉追踪" on><path d="M22 19H2L17 3" strokeWidth="2" /><circle cx="12" cy="9" r="2.500" fill="#fff" stroke="none" /></Cell>
        <Cell label="对象捕捉" on><path d="M5 8V22H22V5H9" strokeWidth="2" /><path d="M1 1H7V7H1Z" strokeWidth="2" /></Cell>
        <ArrowBtn c="w-[22px]" big />
      </Grp>
      <Grp><Cell label="线宽"><path d="M0 3H24" strokeWidth="1.800" /><path d="M0 10H13" strokeWidth="4" /><path d="M13 9H24M13 17H24" /><path d="M0 18H13" strokeWidth="5" /></Cell></Grp>
      <Grp c="ml-px"><Cell label="透明度" on><path d="M1 1H23V23H1Z" fill="#3f6a9e" strokeWidth="2" />{[3, 7, 11, 15, 19].map((y, r) => [0, 1, 2].map((k) => { const x = 3 + k * 8 + (r % 2 ? 4 : 0); return x < 20 ? <rect key={`${x}${y}`} x={x} y={y} width="3.500" height="3.500" fill="#eef0f2" stroke="none" /> : null; }))}</Cell></Grp>
      <Grp c="ml-px"><Cell label="选择循环"><path d="M4 0V8M0 4H8" strokeWidth="1.800" /><path d="M6 18V7H20" /><path d="M9 9H23V23H9Z" fill="#5fd08a" stroke="#36424e" /></Cell></Grp>
      <Grp>
        <Cell label="三维对象捕捉" c="w-8"><path d="M7 7H17V18H7ZM7 7L13 1H23L17 7M23 1V12L17 18" strokeWidth="1.500" /><path d="M1 17H7V23H1Z" stroke="#e39a85" fill="#36424e" strokeWidth="1.500" /></Cell>
        <ArrowBtn c="w-6" big />
      </Grp>
      <Grp c="ml-1">
        <Cell label="动态 UCS" on><path d="M4 2V20H22" strokeWidth="2" /><path d="M4 0L8 6H0ZM24 20L18 24V16Z" fill="#fff" stroke="none" /><path d="M16 3L11 10H15L12 16L20 8H16L18 3Z" fill="#fff" stroke="none" /></Cell>
        <Cell label="选择过滤" c="w-8"><path d="M3 7H16V21H3ZM3 7L8 2H22V15L16 21M16 7L22 2" />{dot(3, 7, 5)}{dot(16, 7, 5)}{dot(3, 21, 5)}{dot(16, 21, 5)}</Cell>
        <ArrowBtn c="w-6" big />
        <Cell label="小控件" on><path d="M12 2L21 7V17L12 22L3 17V7ZM12 2V13L3 18M12 13L21 18" strokeWidth="1.800" />{[[12, 2], [3, 18], [21, 18], [12, 13]].map(([x, y]) => <circle key={`${x}${y}`} cx={x} cy={y} r="1.800" fill="#5b85b9" />)}</Cell>
        <ArrowBtn c="w-[22px]" big />
      </Grp>
      <Grp c="ml-1">
        <Cell label="注释可见性" on><path d="M10 1L14 14L20 22L11 18L2 22L7 14Z" fill="#fff" stroke="none" /><circle cx="19" cy="6" r="3.500" strokeWidth="2" /></Cell>
        <Cell label="自动缩放"><path d="M10 1L14 14L20 22L11 18L2 22L7 14Z" fill={W} stroke="none" /><path d="M20 2L15 8H18L16 13L23 6H19Z" fill="#fff" stroke="none" /></Cell>
        <Cell label="注释比例图标" c="w-8"><path d="M12 1L16 14L22 22L12 18L2 22L8 14Z" fill={W} stroke="none" /></Cell>
        <div className="relative flex w-[106px] items-center">
          <select aria-label="注释比例" className="h-full w-full appearance-none bg-transparent pl-[8px] text-[16px]"><option>1:1 / 100%</option></select>
          <span className="pointer-events-none absolute right-[5px] flex"><Tri big /></span>
        </div>
      </Grp>
      <Grp c="ml-1">
        <button type="button" aria-label="切换工作空间" className="flex w-8 items-center justify-center"><Gear /></button>
        <ArrowBtn c="w-6" big />
      </Grp>
      <Grp><Cell label="注释监视器"><path d="M12 1V23M1 12H23" strokeWidth="2.500" /></Cell></Grp>
      <Grp c="ml-1">
        <div className="relative flex w-[136px] items-center">
          <span className="pointer-events-none absolute left-[6px] flex"><Ico><path d="M5 1H17V4H12V6H15V8H12V10H17V12H12V14H15V16H12V18H17V23H5Z" fill={W} stroke="none" /></Ico></span>
          <select aria-label="单位" className="h-full w-full appearance-none bg-transparent pl-[41px] text-[17px]"><option>小数</option></select>
          <span className="pointer-events-none absolute right-[5px] flex"><Tri big /></span>
        </div>
      </Grp>
      <Grp><Cell label="快捷特性"><path d="M4 2H20V22H4Z" strokeWidth="1.800" /><path d="M4 4H20M7 9H9M12 9H18M7 13.500H9M12 13.500H18M7 18H9M12 18H18" strokeWidth="1.800" /></Cell></Grp>
      <Grp c="ml-1">
        <Cell label="锁定用户界面" c="w-8"><path d="M10 18H2V2H21V8M2 4H21" strokeWidth="1.800" /><path d="M11 15H20V23H11Z" fill="#fff" stroke="none" /><path d="M18 15V12A3 3 0 0 1 23 12V15" /></Cell>
        <ArrowBtn c="w-6" big />
      </Grp>
      <Grp><Cell label="隔离对象"><path d="M2 1H10V10H2ZM12 16L17 23H7Z" strokeWidth="1.500" /><circle cx="19" cy="10" r="4.500" strokeWidth="1.500" /></Cell></Grp>
      <Grp c="ml-1"><Cell label="硬件加速" on><circle cx="12" cy="12" r="10.500" fill="#7da3d0" strokeWidth="2" /><path d="M20 6L14 15L9 18L12 13Z" fill="#fff" stroke="none" /></Cell></Grp>
      <Grp c="ml-1"><Cell label="图形性能" c="w-8"><path d="M7 0C16 -1 20 4 20 10L12 18L4 12Z" fill="#2b6cb8" stroke="none" /><path d="M5 1V9M0 5H18M16 2V8" stroke="#9dd0f5" /><path d="M1 14H10V22H1Z" fill="#f5b335" stroke="none" /><path d="M11 17L16 21L23 13" stroke="#46a758" strokeWidth="3" /></Cell></Grp>
      <Grp c="ml-[3px]">
        <Cell label="全屏显示"><path d="M1 3H23V21H1Z" strokeWidth="1.800" /><path d="M13 10L19 6M15 6H19V10M11 14L5 18M5 14V18H9" /></Cell>
        <Cell label="自定义"><path d="M1 3H23M1 12H23M1 21H23" strokeWidth="2.600" /></Cell>
      </Grp>
    </footer>
  );
}

/* ---------- Windows taskbar ---------- */

function TaskApp({ label, icon, on, run = true }: { label: string; icon: ReactNode; on?: boolean; run?: boolean }) {
  return (
    <button type="button" aria-label={label} className={`relative flex h-[53px] w-[54px] items-center justify-center rounded-md ${on ? 'bg-[#fcfbfb]' : ''}`}>
      {icon}
      {run && <span className={`absolute bottom-0 h-1 rounded-full ${on ? 'w-[22px] bg-[#2d7382]' : 'w-2 bg-[#8b8b8b]'}`} />}
    </button>
  );
}

function Taskbar() {
  const i = 'h-9 w-9';
  const v = '0 0 36 36';
  return (
    <div className="relative grid h-[68px] grid-cols-[1fr_auto_1fr] items-center bg-[#f3f0ef] text-[#333]">
      <span />
      <div className="flex items-center gap-2 pb-[1px] pl-[3px]">
        <TaskApp label="开始" run={false} icon={<Ico c={i} vb={v}><defs><linearGradient id="win" x1="0" y1="0" x2="1" y2="1"><stop offset="0" stopColor="#35b6f5" /><stop offset="1" stopColor="#0768cf" /></linearGradient></defs><path d="M2 2H17V17H2ZM19 2H34V17H19ZM2 19H17V34H2ZM19 19H34V34H19Z" fill="url(#win)" stroke="none" /></Ico>} />
        <TaskApp label="文件资源管理器" icon={<Ico c={i} vb={v}><path d="M1 4Q1 2 3 2H13L16 5V10H1Z" fill="#e29a16" stroke="none" /><path d="M1 8H13L17 4H33Q35 4 35 6V32H1Z" fill="#fbc934" stroke="none" /><path d="M8 32V25Q8 23 10 23H26Q28 23 28 25V32Z" fill="#1766b5" stroke="none" /></Ico>} />
        <TaskApp label="浏览器" icon={<Ico c={i} vb={v}><circle cx="17" cy="19" r="11" stroke="#68b82e" strokeWidth="6" /><path d="M9 19H27" stroke="#68b82e" strokeWidth="5" /><path d="M20 23H32" stroke="#f3f0ef" strokeWidth="3" /><path d="M5 28C0 38 10 34 16 31M20 5C27 1 34 0 31 7" stroke="#8ac957" strokeWidth="2" /></Ico>} />
        <TaskApp label="记事本" icon={<Ico c={i} vb={v}><path d="M5 3H31V31H5Z" fill="#33a8dd" stroke="none" /><path d="M5 33H31" stroke="#a6532b" strokeWidth="3" /><path d="M9 0V5M15 0V5M21 0V5M27 0V5" stroke="#1e5170" strokeWidth="2.500" /><path d="M10 12H26M10 18H26M10 24H26" stroke="#124d73" strokeWidth="2.500" /></Ico>} />
        <TaskApp label="AutoCAD" on icon={<Ico c={i} vb={v}><path d="M2 4H20V30H2Z" fill="#f8e1de" stroke="none" /><path d="M6 31L16 6H22L30 31H24L22.500 26H14L11.500 31ZM15 20L21 22L18.500 13Z" fill="#c5362c" fillRule="evenodd" stroke="none" /></Ico>} />
      </div>
      <div className="flex items-center justify-end pr-[26px]">
        <button type="button" aria-label="显示隐藏的图标"><Ico><path d="M4 16L12 8L20 16" stroke="#333" strokeWidth="2" /></Ico></button>
        <button type="button" aria-label="安全卫士" className="ml-[10px]"><Ico><path d="M12 2C15 4 18 5 21 4V12C21 18 16 21 12 22C8 21 3 18 3 12V4C6 5 9 4 12 2Z" fill="#5f9d2f" stroke="#a3c98a" /><path d="M8 7H16V12C16 15 14 16 12 17C10 16 8 15 8 12Z" fill="#e6f2c8" stroke="none" /></Ico></button>
        <button type="button" aria-label="声音" className="ml-[10px]"><Ico><path d="M0 8H5L13 1V23L5 16H0Z" fill="#c9614b" stroke="#8d3a2b" strokeWidth="1" /><path d="M16 7Q18 12 16 17M19 4Q23 12 19 20" stroke="#6b5550" /></Ico></button>
        <button type="button" aria-label="助手" className="ml-[10px]"><Ico><circle cx="12" cy="12" r="11" fill="#f2c500" stroke="none" /><path d="M2 8C6 0 16 0 21 5L14 5C8 4 5 6 2 8ZM22 16C18 24 8 24 3 19L10 19C16 20 19 18 22 16Z" fill="#3e8f3b" stroke="none" /><path d="M12 7V17M7 12H17" stroke="#2c6b25" strokeWidth="2.500" /></Ico></button>
        <button type="button" aria-label="QQ" className="ml-[10px]"><Ico><ellipse cx="12" cy="14" rx="9" ry="9" fill="#161616" stroke="none" /><ellipse cx="12" cy="7" rx="6.500" ry="6.500" fill="#161616" stroke="none" /><ellipse cx="12" cy="17" rx="6" ry="5.500" fill="#fff" stroke="none" /><ellipse cx="9.800" cy="5.500" rx="1.600" ry="2" fill="#fff" stroke="none" /><ellipse cx="14.200" cy="5.500" rx="1.600" ry="2" fill="#fff" stroke="none" /><path d="M8 9H16L12 11Z" fill="#f5a51c" stroke="none" /><path d="M4 12Q12 17 20 11V13Q12 19 4 14Z" fill="#dd2d24" stroke="#dd2d24" /><path d="M2 22H9M15 22H22" stroke="#f5a51c" strokeWidth="2.500" /></Ico></button>
        <button type="button" aria-label="微信" className="ml-[10px]"><Ico><ellipse cx="9" cy="9" rx="9" ry="8" fill="#27b561" stroke="none" /><path d="M3 14L2 20L8 16Z" fill="#27b561" stroke="none" /><ellipse cx="17" cy="16" rx="7" ry="6" fill="#e2e2e2" stroke="none" /></Ico></button>
        <button type="button" aria-label="麦克风" className="ml-[14px]"><Ico><rect x="8" y="1" width="8" height="14" rx="4" stroke="#4d8594" /><path d="M4 10C4 22 20 22 20 10M12 19V24" stroke="#4a6670" /></Ico></button>
        <button type="button" className="ml-[22px] text-[21px]">中</button>
        <button type="button" className="ml-[33px] text-[21px]">拼</button>
        <button type="button" aria-label="网络" className="ml-[30px]"><Ico><path d="M15 3H2V18H17V13M8 18V22M5 22H14" stroke="#333" strokeWidth="1.800" /><path d="M17 2H23V8H17ZM20 8V13C20 16 20 20 17 22" stroke="#333" strokeWidth="1.800" /></Ico></button>
        <button type="button" aria-label="音量" className="ml-3"><Ico><path d="M1 8H5L10 3V21L5 16H1Z" stroke="#333" /><path d="M13 8Q15 12 13 16M16.500 6Q20 12 16.500 18M20 4Q24.500 12 20 20" stroke="#333" /></Ico></button>
        <button type="button" className="ml-[20px] text-right text-[16px] leading-[23px]">
          <time className="block">13:39</time>
          <time className="block">2022-09-17</time>
        </button>
        <button type="button" aria-label="专注助手" className="ml-3"><Ico><path d="M9 2C20 0 24 14 15 20C10 23 5 21 3 17C10 17 12 9 9 2Z" stroke="#444" /></Ico></button>
      </div>
      <span className="absolute bottom-0 right-[227px] h-1 w-[121px] rounded-t border border-b-0 border-[#c9c6c5] bg-white" />
    </div>
  );
}

export default function App() {
  return (
    <div className="flex min-h-screen flex-col bg-black pl-[238px] pr-[239px] font-['Noto_Sans','Noto_Sans_CJK_SC',sans-serif]">
      <TitleBar />
      <MenuTabs />
      <Ribbon />
      <FileTabs />
      <Canvas />
      <LayoutTabs />
      <StatusBar />
      <Taskbar />
    </div>
  );
}
